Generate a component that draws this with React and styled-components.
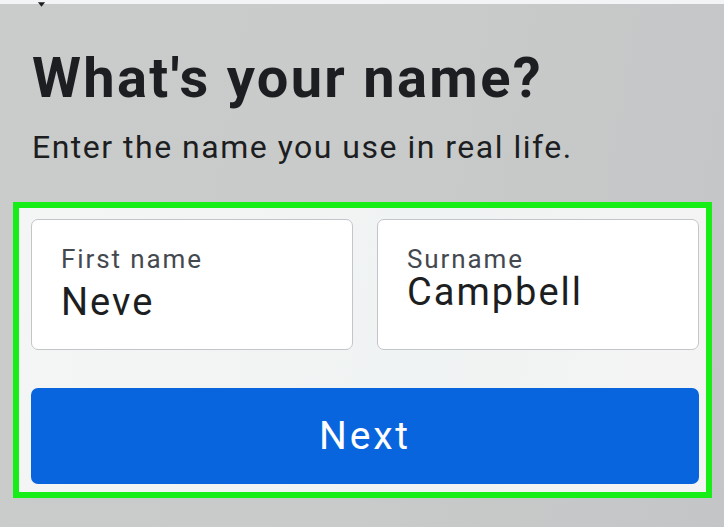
import React from 'react';
import styled, { createGlobalStyle } from 'styled-components';

const GlobalStyle = createGlobalStyle`
  html, body {
    margin: 0;
    padding: 0;
    width: 724px;
    height: 527px;
    overflow: hidden;
  }
  body {
    font-family: Roboto, "Liberation Sans", sans-serif;
  }
`;

function App() {
  return (
    <>
      <GlobalStyle />
      <Screen>
        <TopStrip>
          <Notch viewBox="0 0 10 6">
            <path d="M1 0 L9 0 L5 5 Z" fill="#1c1e21" />
          </Notch>
        </TopStrip>
        <Main>
          <Heading>What's your name?</Heading>
          <Subheading>Enter the name you use in real life.</Subheading>
          <Highlight>
            <FieldRow>
              <Field>
                <Label>First name</Label>
                <Value>Neve</Value>
              </Field>
              <Field>
                <Label>Surname</Label>
                <Value tight>Campbell</Value>
              </Field>
            </FieldRow>
            <NextButton>Next</NextButton>
          </Highlight>
        </Main>
      </Screen>
    </>
  );
}

export default App;

const Screen = styled.div`
  width: 724px;
  height: 527px;
  display: flex;
  flex-direction: column;
  background: linear-gradient(100deg, #cacccb 0%, #c9cbca 55%, #c3c5c7 100%);
`;

const TopStrip = styled.div`
  height: 4px;
  background: #f3f4f5;
  display: flex;
  padding-left: 37px;
  overflow: visible;
`;

const Notch = styled.svg`
  width: 9px;
  height: 6px;
  margin-top: 2px;
`;

const Main = styled.div`
  display: flex;
  flex-direction: column;
  padding-left: 13px;
`;

const Heading = styled.h1`
  margin: 46px 0 0 19px;
  font-size: 56px;
  line-height: 56px;
  font-weight: 700;
  color: #1c1e21;
  letter-spacing: 2.3px;
`;

const Subheading = styled.p`
  margin: 25px 0 0 19px;
  font-size: 32px;
  line-height: 32px;
  font-weight: 400;
  color: #1c1e21;
  letter-spacing: 1.5px;
`;

const Highlight = styled.div`
  margin-top: 39px;
  width: 699px;
  height: 296px;
  box-sizing: border-box;
  border: 6px solid #17ee17;
  background: linear-gradient(100deg, #f4f6f5 0%, #f0f3f3 60%, #f5f4f4 100%);
  padding: 11px 7px 7px 12px;
  display: flex;
  flex-direction: column;
`;

const FieldRow = styled.div`
  display: grid;
  grid-template-columns: 322px 322px;
  gap: 24px;
`;

const Field = styled.div`
  height: 131px;
  box-sizing: border-box;
  background: #ffffff;
  border: 1.5px solid #c2c6cb;
  border-radius: 7px;
  padding: 27px 0 0 29px;
  display: flex;
  flex-direction: column;
`;

const Label = styled.span`
  font-size: 26px;
  line-height: 24px;
  color: #444950;
  letter-spacing: 1.9px;
`;

const Value = styled.span`
  margin-top: ${(p) => (p.tight ? '3px' : '13px')};
  font-size: 38px;
  line-height: 36px;
  font-weight: 400;
  color: #1c1e21;
  letter-spacing: 2px;
`;

const NextButton = styled.button`
  margin-top: 38px;
  height: 96px;
  width: 668px;
  border: none;
  border-radius: 7px;
  background: #0865de;
  color: #ffffff;
  font-family: Roboto, "Liberation Sans", sans-serif;
  font-size: 39px;
  line-height: 38px;
  font-weight: 400;
  letter-spacing: 2.8px;
  display: flex;
  align-items: center;
  justify-content: center;
  padding: 0;
`;
